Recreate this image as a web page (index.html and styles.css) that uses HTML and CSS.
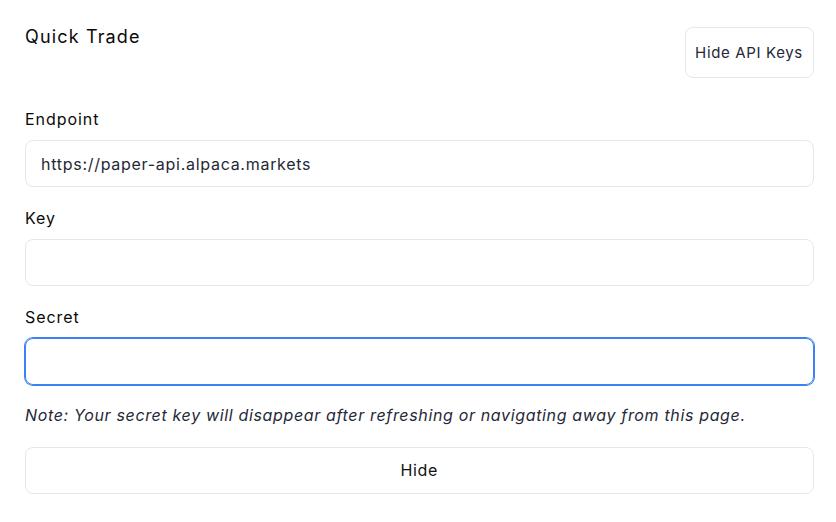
FILE: index.html
```html
<!DOCTYPE html>
<html>
<head>
<meta charset="utf-8">
<link rel="stylesheet" href="styles.css">
</head>
<body>
<div class="panel">
  <div class="header">
    <h2 class="title">Quick Trade</h2>
    <button class="btn btn-small">Hide API Keys</button>
  </div>
  <div class="field">
    <label class="label">Endpoint</label>
    <div class="input">https://paper-api.alpaca.markets</div>
  </div>
  <div class="field">
    <label class="label">Key</label>
    <div class="input"></div>
  </div>
  <div class="field">
    <label class="label">Secret</label>
    <div class="input focused"></div>
  </div>
  <p class="note">Note: Your secret key will disappear after refreshing or navigating away from this page.</p>
  <button class="btn btn-wide">Hide</button>
</div>
</body>
</html>
```
FILE: styles.css
```css
* { box-sizing: border-box; }
body {
  margin: 0;
  background: #ffffff;
  font-family: Inter, "Noto Sans", sans-serif;
  color: #111111;
  letter-spacing: 0.65px;
}
.panel {
  padding: 23px 22.5px 0 25px;
  display: flex;
  flex-direction: column;
}
.header {
  display: flex;
  justify-content: space-between;
  align-items: flex-start;
  margin-bottom: 29px;
}
.title {
  margin: 0;
  font-size: 18px;
  line-height: 28px;
  font-weight: 400;
  letter-spacing: 1.15px;
  color: #0a0a0a;
}
.btn {
  background: #fff;
  border: 1px solid #e5e7eb;
  border-radius: 8px;
  font-family: Inter, "Noto Sans", sans-serif;
  letter-spacing: 0.65px;
  cursor: pointer;
}
.btn-small {
  margin-top: 3.5px;
  height: 51px;
  width: 129px;
  font-size: 15px;
  color: #1f2937;
  padding: 0;
}
.field {
  display: flex;
  flex-direction: column;
  margin-bottom: 18.5px;
}
.label {
  font-size: 16px;
  line-height: 24px;
  font-weight: 400;
  letter-spacing: 0.95px;
  color: #0a0a0a;
  margin-bottom: 9.5px;
}
.input {
  height: 47px;
  border: 1px solid #e5e7eb;
  border-radius: 8px;
  padding: 0 15px;
  display: flex;
  align-items: center;
  font-size: 16px;
  letter-spacing: 0.72px;
  color: #1f2937;
}
.input.focused {
  border-color: #3b82f6;
  box-shadow: 0 0 0 1px #3b82f6;
}
.note {
  margin: -0.5px 0 19.5px;
  font-size: 16px;
  line-height: 24px;
  font-style: italic;
  color: #1f2937;
}
.btn-wide {
  height: 47px;
  width: 100%;
  font-size: 16px;
  color: #111;
}
```
